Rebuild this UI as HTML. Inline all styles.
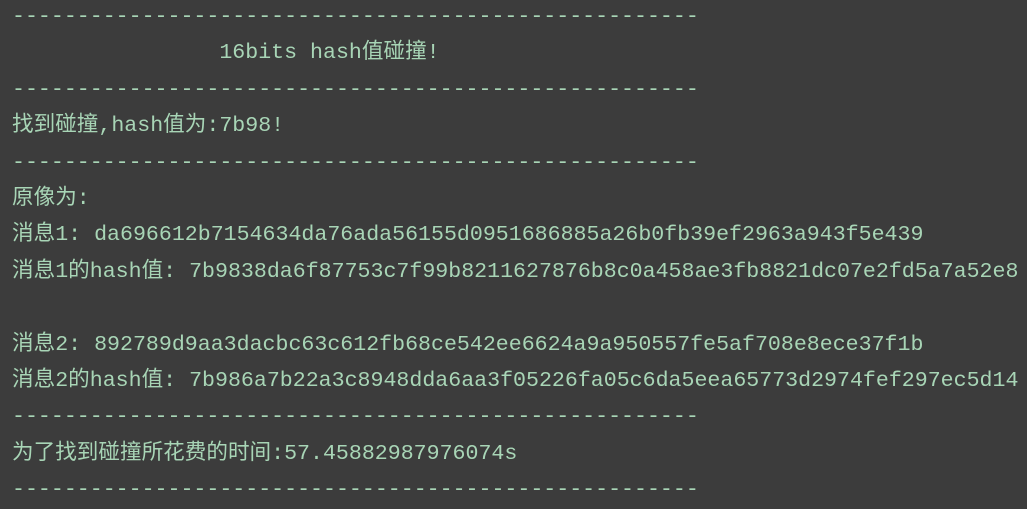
<!DOCTYPE html>
<html><head><meta charset="utf-8"><style>
html,body{margin:0;padding:0;background:#3c3c3c;width:1027px;height:504px;overflow:hidden}
pre{margin:0;position:absolute;left:12px;top:-1px;font-family:"Liberation Mono","Noto Sans CJK SC",monospace;font-size:21.6px;line-height:36.4px;color:#a8d5b6;white-space:pre}
</style></head><body><pre>-----------------------------------------------------
                16bits hash值碰撞!
-----------------------------------------------------
找到碰撞,hash值为:7b98!
-----------------------------------------------------
原像为:
消息1: da696612b7154634da76ada56155d0951686885a26b0fb39ef2963a943f5e439
消息1的hash值: 7b9838da6f87753c7f99b8211627876b8c0a458ae3fb8821dc07e2fd5a7a52e8

消息2: 892789d9aa3dacbc63c612fb68ce542ee6624a9a950557fe5af708e8ece37f1b
消息2的hash值: 7b986a7b22a3c8948dda6aa3f05226fa05c6da5eea65773d2974fef297ec5d14
-----------------------------------------------------
为了找到碰撞所花费的时间:57.45882987976074s
-----------------------------------------------------</pre></body></html>
